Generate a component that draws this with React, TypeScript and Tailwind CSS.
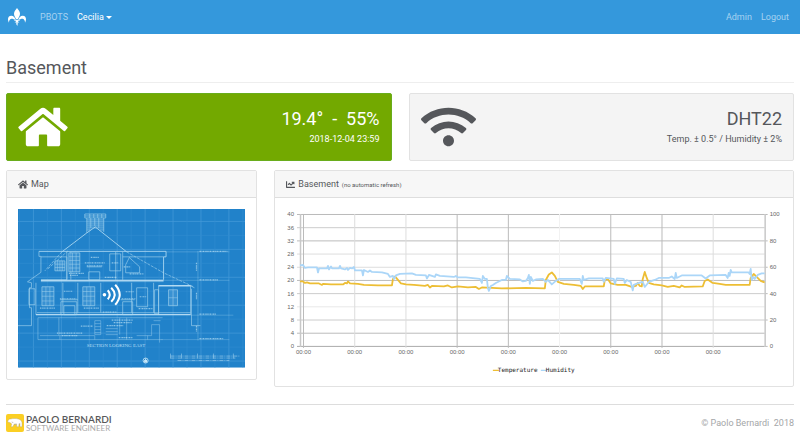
import React from "react";
import { FaWifi, FaChartLine } from "react-icons/fa";

const HOUSE =
  "M488 312.7V456c0 13.3-10.7 24-24 24H348c-6.6 0-12-5.4-12-12V356c0-6.6-5.4-12-12-12h-72c-6.6 0-12 5.4-12 12v112c0 6.6-5.4 12-12 12H112c-13.3 0-24-10.7-24-24V312.7c0-3.6 1.6-7 4.4-9.3l188-154.8c4.4-3.6 10.8-3.6 15.3 0l188 154.8c2.7 2.3 4.3 5.7 4.3 9.3zm83.6-60.9L488 182.9V44.4c0-6.6-5.4-12-12-12h-56c-6.6 0-12 5.4-12 12V117l-89.5-73.7c-17.7-14.6-43.3-14.6-61 0L4.4 251.8c-5.1 4.2-5.8 11.8-1.6 16.9l25.5 31c4.2 5.1 11.8 5.8 16.9 1.6l235.2-193.7c4.4-3.6 10.8-3.6 15.3 0l235.2 193.7c5.1 4.2 12.7 3.5 16.9-1.6l25.5-31c4.2-5.2 3.4-12.7-1.7-16.9z";

function HouseIcon({ className }: { className: string }) {
  return (
    <svg viewBox="0 0 576 512" fill="currentColor" className={className} aria-hidden="true">
      <path d={HOUSE} />
    </svg>
  );
}

function FleurIcon() {
  return (
    <svg viewBox="0 0 54 54" className="size-[18px] fill-white" aria-hidden="true">
      <path d="M27 0C24 5 18 9 18 17c0 6 4 10 6 16h6c2-6 6-10 6-16C36 9 30 5 27 0Z" />
      <path d="M23 36c-1-7-7-13-13-13C3 23 0 28 0 34c0 4 1 7 3 10 0-6 2-11 7-12 5 0 9 2 13 4Z" />
      <path d="M31 36c1-7 7-13 13-13 7 0 10 5 10 11 0 4-1 7-3 10 0-6-2-11-7-12-5 0-9 2-13 4Z" />
      <path d="M19 35h16v3H19zM25 38l-5 6 5-1v6l3 5 1-6v-5l5 1-5-6Z" />
    </svg>
  );
}

type Point = [number, number];

const temperature: Point[] = [
  [14, 72.5], [17, 72.5], [19, 74], [21, 73.5], [24, 74.5], [33, 74.5], [36, 76], [37, 75], [45, 75.5], [57, 75.5],
  [59, 74], [61, 74.5], [62, 72.5], [64, 74.5], [72, 75], [78, 76], [92, 76.5], [106, 76.5], [107, 70], [109, 67.5],
  [112, 71], [115, 74.5], [120, 75.5], [128, 76], [139, 77], [142, 76], [144, 78.5], [146, 77], [158, 77.5],
  [162, 76.5], [166, 78.5], [172, 77.5], [182, 78.5], [190, 78], [193, 80], [196, 78.5], [216, 79.5], [240, 79],
  [259, 79.5], [260, 71], [263, 65.5], [266, 63.5], [269, 67], [272, 73], [278, 75], [288, 76], [295, 77], [297, 80],
  [299, 77.5], [318, 77.5], [319, 71], [322, 70], [325, 74.5], [332, 76], [340, 76], [346, 78], [350, 77],
  [352, 74], [354, 77], [356, 77.5], [357, 70], [359, 63], [361, 69], [363, 74], [368, 75.5], [376, 76.5],
  [382, 78], [388, 77], [394, 78.5], [396, 76.5], [399, 78], [417, 77.5], [419, 72], [422, 70.5], [427, 74],
  [434, 75], [440, 76], [464, 76], [465, 69], [468, 65], [472, 69], [475, 72], [479, 73.5],
];

const humidity: Point[] = [
  [14, 56.5], [17, 56], [19, 59], [22, 58.5], [31, 58.5], [32, 63.5], [33, 59.5], [41, 59.5], [42, 57], [43, 60.5],
  [45, 57.5], [46, 59.5], [53, 59.5], [54, 57], [55, 59.5], [59, 60.5], [61, 59], [62, 61], [64, 59], [66, 59.5],
  [68, 58], [69, 61.5], [76, 61.5], [77, 66.5], [78, 61], [82, 63], [84, 61.5], [86, 63], [96, 63.5], [102, 65],
  [104, 68], [107, 67], [108, 70], [110, 66.5], [114, 65], [126, 64.5], [130, 66], [140, 66.5], [141, 69.5],
  [143, 66], [149, 68], [150, 65.5], [154, 67], [168, 68], [170, 67], [172, 68.5], [180, 68.5], [194, 70],
  [196, 74], [197, 67], [199, 70], [201, 70], [202, 79], [203, 82], [205, 77], [207, 76], [210, 74], [216, 71],
  [220, 71], [221, 67], [224, 70], [234, 70.5], [237, 72.5], [240, 72], [242, 69], [243, 66], [244, 75], [245, 68],
  [247, 72], [250, 70.5], [257, 70], [260, 73], [262, 71], [266, 75.5], [270, 72], [273, 70], [294, 70], [296, 75],
  [297, 67], [298, 71], [303, 69.5], [317, 69.5], [318, 73], [320, 69], [328, 70], [329, 75], [331, 69.5],
  [338, 70], [339, 74], [341, 71], [345, 73], [347, 81.5], [348, 76], [353, 74], [357, 73], [359, 78], [363, 73],
  [369, 71], [373, 69], [383, 69], [386, 67.5], [389, 70], [390, 64], [391, 69], [396, 66.5], [416, 66.5],
  [420, 69.5], [424, 66.5], [440, 66], [442, 69], [443, 64], [444, 67], [445, 61], [446, 63.5], [463, 63.5],
  [464, 65], [465, 60], [466, 71], [468, 68], [469, 70], [472, 66], [476, 64.5], [479, 64.5],
];

const toPoints = (series: Point[]) => series.map((p) => p.join(",")).join(" ");

const rowColors = ["#bbb", "#ccc", "#bbb", "#ddd", "#ddd", "#bbb", "#ccc", "#e8e8e8", "#ccc", "#bbb", "#aaa"];
const columnColors = ["#bbb", "#ddd", "#ddd", "#bbb", "#bbb", "#f2f2f2", "#bbb", "#bbb", "#ddd"];

function TrendChart() {
  return (
    <svg viewBox="0 0 496 166" className="block w-full" role="img" aria-label="Temperature and humidity over time">
      <g fontFamily="'Liberation Sans', sans-serif" fontSize="6" fill="#666">
        {rowColors.map((color, i) => {
          const y = 5.5 + i * 13.2;
          return (
            <g key={i}>
              <path d={`M11 ${y}H479`} stroke={color} />
              <text x="8" y={y + 2} textAnchor="end">
                {40 - i * 4}
              </text>
            </g>
          );
        })}
        {columnColors.map((color, i) => {
          const x = 17.5 + i * 51.25;
          return (
            <g key={i}>
              <path d={`M${x} 5V139`} stroke={color} />
              <text x={x} y="145" textAnchor="middle">
                00:00
              </text>
            </g>
          );
        })}
        {[100, 80, 60, 40, 20, 0].map((value, i) => (
          <g key={value}>
            <path d={`M479 ${5.5 + i * 26.4}h3`} stroke="#bbb" />
            <text x="484" y={7.5 + i * 26.4}>
              {value}
            </text>
          </g>
        ))}
      </g>
      <path d="M14.5 5V138M479.5 5V138" stroke="#c8c8c8" strokeWidth="1.5" />
      <g fill="none" strokeLinejoin="round" strokeWidth="1.8">
        <polyline points={toPoints(temperature)} stroke="#edbe34" />
        <polyline points={toPoints(humidity)} stroke="#abd6f8" />
      </g>
      <path d="M207 161.5h6" stroke="#edbe34" strokeWidth="1.3" />
      <path d="M255 161.5h6" stroke="#abd6f8" strokeWidth="1.3" />
      <g fontFamily="'DejaVu Sans Mono', monospace" fontSize="6" fill="#222">
        <text x="212" y="163">Temperature</text>
        <text x="260" y="163">Humidity</text>
      </g>
    </svg>
  );
}

/* Sash window with a regular grid of panes. */
function Sash({ x, y, w, h, cols, rows }: { x: number; y: number; w: number; h: number; cols: number; rows: number }) {
  let panes = "";
  for (let c = 1; c < cols; c++) panes += `M${x + (w * c) / cols} ${y}v${h}`;
  for (let r = 1; r < rows; r++) panes += `M${x} ${y + (h * r) / rows}h${w}`;
  return (
    <g>
      <path d={`M${x} ${y}h${w}v${h}h${-w}z`} fill="#4fa0da" fillOpacity=".5" />
      <path d={panes} strokeWidth=".45" />
    </g>
  );
}

function Blueprint() {
  return (
    <svg viewBox="0 0 228 159" className="block w-full" role="img" aria-label="House blueprint with the sensor position">
      <defs>
        <pattern id="grid" x="15" y="12" width="28" height="28" patternUnits="userSpaceOnUse">
          <path d="M0 .5H28M.5 0V28" stroke="#4499d8" strokeWidth=".7" />
          <path d="M0 14.5H28M14.5 0V28" stroke="#2f8cd0" strokeWidth=".6" />
        </pattern>
      </defs>
      <rect width="228" height="159" fill="#2182ca" />
      <rect width="228" height="159" fill="url(#grid)" />
      <g fill="none" stroke="#a9d6f0" strokeWidth=".6">
        <path d="M67 5h21v4H67zM69 9v15M86 9v14M67 7h21M69 11h17M69 13h17M69 15h17M69 17h17M69 19h17M69 21h4M82 21h4M72 5v4M76 5v4M80 5v4M84 5v4M73 9v10M77 9v8M81 9v10" />
        <path d="M69 24 77.500 18 109 43M69 24 44 43M21 42.500H148.500V48H146V71" strokeWidth=".9" />
        <path d="M109 43 146 64 176 78M44 43 27 62M50 42 30 60" strokeDasharray="3 1" />
        <path d="M21 42.500v5h2v16L9.500 73l4 1v5h-2v20h2v18H0M23 48h26v23H23M49 43v28M53 43v28M98 43v28M105 43v28M146 48h-41M23 71.500H146M23 72.800H146" />
        <path d="M18 74V106H173V77H141v29M19 104H173M45 74v30M60 74v30M83 74v30M114 74v30M136 74v30M141 77h32l4 2M174 80v37h9" />
        <path d="M141 77h32M18 106H173M23 71.500H146" stroke="#d0ebf9" strokeWidth=".9" />
        <path d="M71 63h11v8H71zM69 58h15M112 49l10 9v6h-14v-8l4-8M92 45h11v17H92zM119 79h11v19h-11z" />
        <path d="M42 91h18M43 93h16v13H43zM46 97h11v9H46zM103 91h14M105 93h10v13h-10zM137 81h4v24h-4zM11 80h6v16h-6z" />
        <path d="M20 109H145M20 109v22H145M22 127h20v4M42 127h35v4M41 109v18M102 109v17M109 109v22M119 127h15v-11h8v18M130 127v4M136 112h7M77 112h6v14h-6zM77 115h6M77 118h6M77 121h6M77 124h6M88 120h12M88 123h12M88 126h12" opacity=".7" />
        <Sash x={51} y={44} w={11} h={19} cols={3} rows={5} />
        <Sash x={37} y={52} w={10} h={10} cols={4} rows={3} />
        <Sash x={24} y={78} w={12} h={19} cols={3} rows={4} />
        <Sash x={65} y={78} w={12} h={19} cols={3} rows={4} />
        <Sash x={151} y={81} w={9} h={16} cols={2} rows={2} />
        <path d="M180.500 42V132M148 43H212M146 71.500H212M173 106.500H216M144 131H212" opacity=".5" />
      </g>
      {/* Lettering on the drawing, too small to read at this scale. */}
      <path
        d="M67 54h20M73 48.500h8M69 57h16M51 64.500h15M52 66.500h8M87 68.500h12M94 54h7M106 58h7M112 65h14M46 82.500h9M42 90h17M22 99.500h15M66 99.500h15M85 103.500h14M108 83h8M104 90h14M122 88h7M121 100h14M39 124.500h26M44 127h16M63 117.500h12M94 111.500h21M96 114h18M89 117h17M101 129h14M182 42.500h28M182 71h19M182 105.500h17M182 130h24M179 54v8M179 84v7M179 117v6"
        stroke="#b5def4"
        strokeWidth="1.2"
        strokeDasharray="1.500 .6 .8 .5"
        opacity=".7"
      />
      <path d="M153 147.500H222M153 149.500H218M160 152H212" stroke="#b5def4" strokeWidth=".7" strokeDasharray="4 1 1 1" opacity=".8" />
      <path d="M153 145v5M164 145v5M180 145v5M196 145v5M216 145v5" stroke="#b5def4" strokeWidth=".5" />
      <circle cx="128" cy="152" r="2.500" fill="none" stroke="#c9e8f8" strokeWidth=".8" />
      <path d="M126.500 154v-2.500h1v-1.500h1v1.500h1v2.500z" fill="#c9e8f8" />
      <text x="69" y="138" fontSize="5" fontFamily="'Liberation Serif', serif" fill="#b5def4">
        SECTION LOOKING EAST
      </text>
      <g fill="none" stroke="#fff" strokeWidth="2">
        <circle cx="86.700" cy="86" r="1.800" fill="#fff" stroke="none" />
        <path d="M90 81.500q4 4.500 0 9M93.500 79q7 7 0 14M97.500 76q9 10 0 20" />
      </g>
    </svg>
  );
}

function BearLogo() {
  return (
    <svg viewBox="0 0 54 54" className="size-[18px]" aria-hidden="true">
      <rect width="54" height="54" rx="6" fill="#fbcf24" />
      <path
        d="M6 20c1-3 4-5 8-5 7-2 17-2 23 0 6 2 10 5 11 11v12h-6v-8l-3 1-1 7h-6v-7h-8l-3 7h-6l2-8-4-4-8-2Z"
        fill="#fff"
        stroke="#a0946a"
        strokeWidth="1"
      />
      <path d="M17 24l5 2M24 31l8-1M38 30l5-2" stroke="#aaa" strokeWidth="2" />
    </svg>
  );
}

function PanelHeader({ children }: { children: React.ReactNode }) {
  return (
    <h2 className="flex items-center gap-[3px] border-b border-[#dedede] bg-[#f7f7f7] px-[11px] py-[7px] text-[9px] leading-[12px]">
      {children}
    </h2>
  );
}

export default function App() {
  return (
    <div className="bg-white font-['Roboto',sans-serif] text-[9px] leading-[14px] text-[#55575b]">
      <nav className="flex h-[34px] items-center bg-[#3498dc] pr-[11px] pl-2 text-[#a6d2f1]">
        <a href="#" aria-label="Home" className="mr-[14px]">
          <FleurIcon />
        </a>
        <a href="#">PBOTS</a>
        <button type="button" className="ml-[9px] flex items-center gap-[2px] text-white">
          Cecilia
          <span className="border-x-[3px] border-t-[3px] border-x-transparent border-t-white" />
        </button>
        <div className="ml-auto flex gap-[9px]">
          <a href="#">Admin</a>
          <a href="#">Logout</a>
        </div>
      </nav>

      <main className="px-[6px] pt-[23px]">
        <h1 className="border-b border-[#eee] pb-[3px] text-[18px] leading-[22px]">Basement</h1>

        <div className="mt-[10px] grid grid-cols-2 gap-[17px]">
          <section className="flex items-center justify-between rounded-[2px] border border-[#69ad1c] bg-[#73a900] px-[11px] py-[11px] text-white">
            <HouseIcon className="h-[44px] w-[50px]" />
            <div className="text-right">
              <p className="text-[18px] leading-[22px] whitespace-pre">19.4°{"  "}-{"  "}55%</p>
              <p className="mt-[2px]">2018-12-04 23:59</p>
            </div>
          </section>
          <section className="flex items-center justify-between rounded-[2px] border border-[#e2e2e2] bg-[#f4f4f4] px-[11px] py-[11px]">
            <FaWifi className="h-[44px] w-[55px]" />
            <div className="text-right">
              <p className="text-[18px] leading-[22px]">DHT22</p>
              <p className="mt-[2px]">Temp. ± 0.5° / Humidity ± 2%</p>
            </div>
          </section>
        </div>

        <div className="mt-[9px] grid grid-cols-3 items-start gap-[17px]">
          <section className="overflow-hidden rounded-[2px] border border-[#e2e2e2]">
            <PanelHeader>
              <HouseIcon className="h-[9px] w-[10px]" />
              Map
            </PanelHeader>
            <div className="p-[11px]">
              <Blueprint />
            </div>
          </section>
          <section className="col-span-2 overflow-hidden rounded-[2px] border border-[#e2e2e2]">
            <PanelHeader>
              <FaChartLine className="size-[9px]" />
              Basement
              <small className="pt-[2px] text-[6px] leading-[10px]">(no automatic refresh)</small>
            </PanelHeader>
            <div className="p-[11px]">
              <TrendChart />
            </div>
          </section>
        </div>
      </main>

      <footer className="mx-[6px] mt-[17px] flex items-center justify-between border-t border-[#ddd] pt-[9px] pb-2 text-[#a4a6a8]">
        <a href="#" className="flex items-center gap-[2px] font-['Lato',sans-serif]">
          <BearLogo />
          <span className="flex flex-col">
            <span className="text-[10px] leading-[10px] font-semibold text-[#58585a]">PAOLO BERNARDI</span>
            <span className="text-[8px] leading-[8px] text-[#aaa]">SOFTWARE ENGINEER</span>
          </span>
        </a>
        <p className="whitespace-pre">© Paolo Bernardi{"  "}2018</p>
      </footer>
    </div>
  );
}
